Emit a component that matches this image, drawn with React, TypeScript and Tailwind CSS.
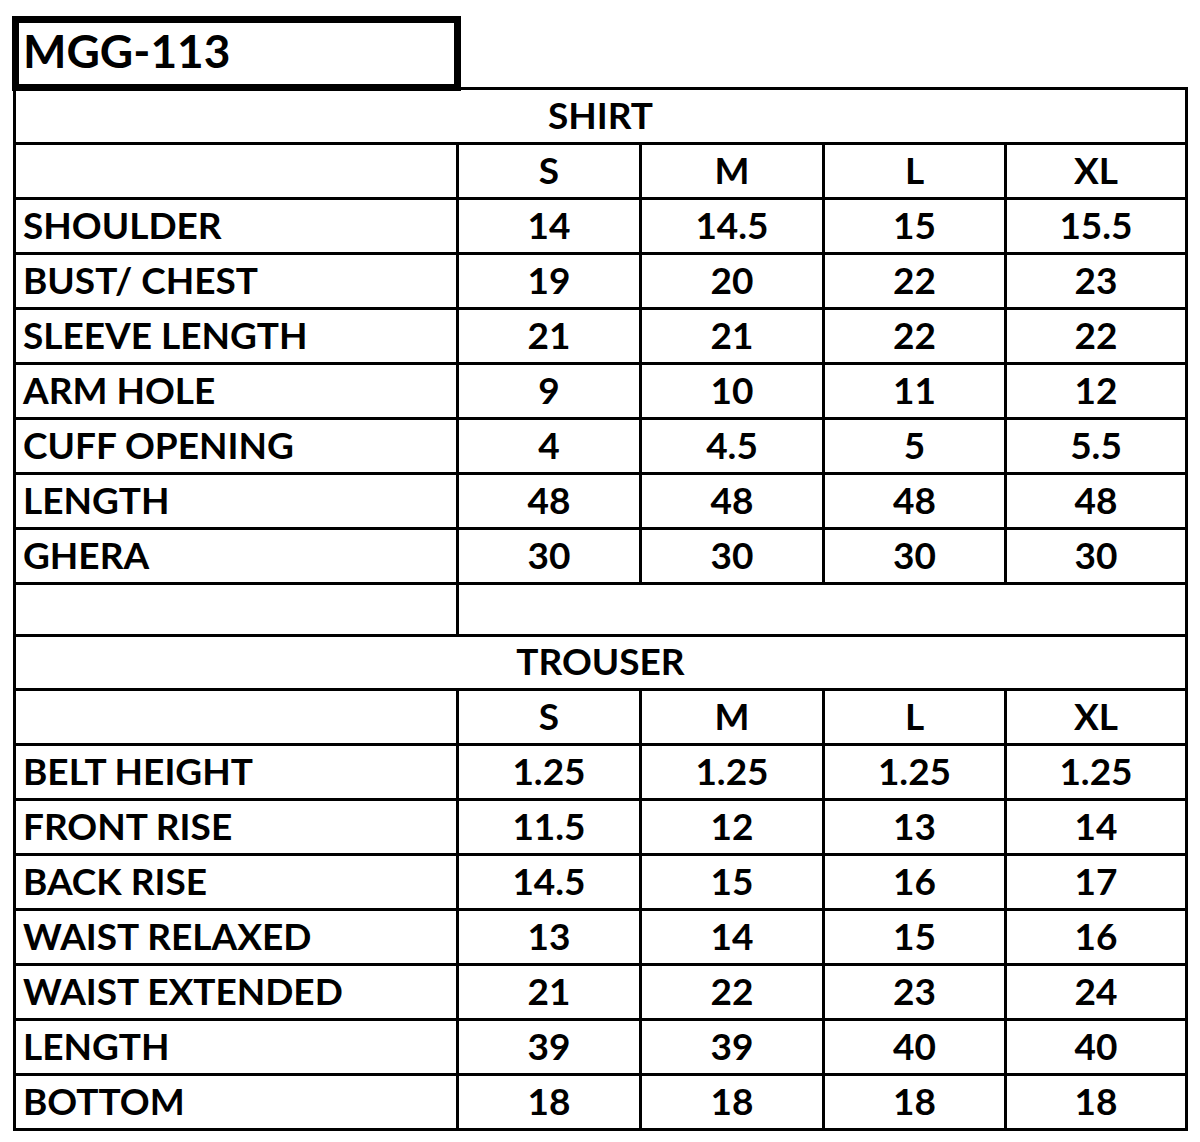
import React from 'react';

const sizes = ['S', 'M', 'L', 'XL'];

const shirt: [string, string[]][] = [
  ['SHOULDER', ['14', '14.5', '15', '15.5']],
  ['BUST/ CHEST', ['19', '20', '22', '23']],
  ['SLEEVE LENGTH', ['21', '21', '22', '22']],
  ['ARM HOLE', ['9', '10', '11', '12']],
  ['CUFF OPENING', ['4', '4.5', '5', '5.5']],
  ['LENGTH', ['48', '48', '48', '48']],
  ['GHERA', ['30', '30', '30', '30']],
];

const trouser: [string, string[]][] = [
  ['BELT HEIGHT', ['1.25', '1.25', '1.25', '1.25']],
  ['FRONT RISE', ['11.5', '12', '13', '14']],
  ['BACK RISE', ['14.5', '15', '16', '17']],
  ['WAIST RELAXED', ['13', '14', '15', '16']],
  ['WAIST EXTENDED', ['21', '22', '23', '24']],
  ['LENGTH', ['39', '39', '40', '40']],
  ['BOTTOM', ['18', '18', '18', '18']],
];

const cell = 'bg-white h-[52px] flex items-center pb-[4px]';

const Section = ({ title, rows, titleH }: { title: string; rows: [string, string[]][]; titleH: string }) => (
  <>
    <div className={`bg-white col-span-5 flex items-center justify-center pb-[4px] ${titleH}`}>{title}</div>
    <div className={cell} />
    {sizes.map(s => (
      <div key={s} className={`${cell} justify-center`}>{s}</div>
    ))}
    {rows.map(([label, vals]) => (
      <React.Fragment key={label}>
        <div className={`${cell} pl-[7px]`}>{label}</div>
        {vals.map((v, i) => (
          <div key={i} className={`${cell} justify-center`}>{v}</div>
        ))}
      </React.Fragment>
    ))}
  </>
);

export default function App() {
  return (
    <div className="w-[1200px] h-[1142px] bg-white pt-[16px] text-black font-bold" style={{ fontFamily: 'Lato, "Liberation Sans", sans-serif' }}>
      <div className="relative z-10 ml-[12px] w-[449px] h-[75px] border-[7px] border-black bg-white flex items-center pl-[4px] pb-[6px] text-[46px] leading-none">
        MGG-113
      </div>
      <div className="-mt-[4px] ml-[13px] w-[1175px] bg-black p-[3px] grid grid-cols-[440px_180px_180px_179px_178px] gap-[3px] text-[37px] leading-none">
        <Section title="SHIRT" rows={shirt} titleH="h-[52px]" />
        <div className="bg-white h-[49px]" />
        <div className="bg-white h-[49px] col-span-4" />
        <Section title="TROUSER" rows={trouser} titleH="h-[51px]" />
      </div>
    </div>
  );
}
